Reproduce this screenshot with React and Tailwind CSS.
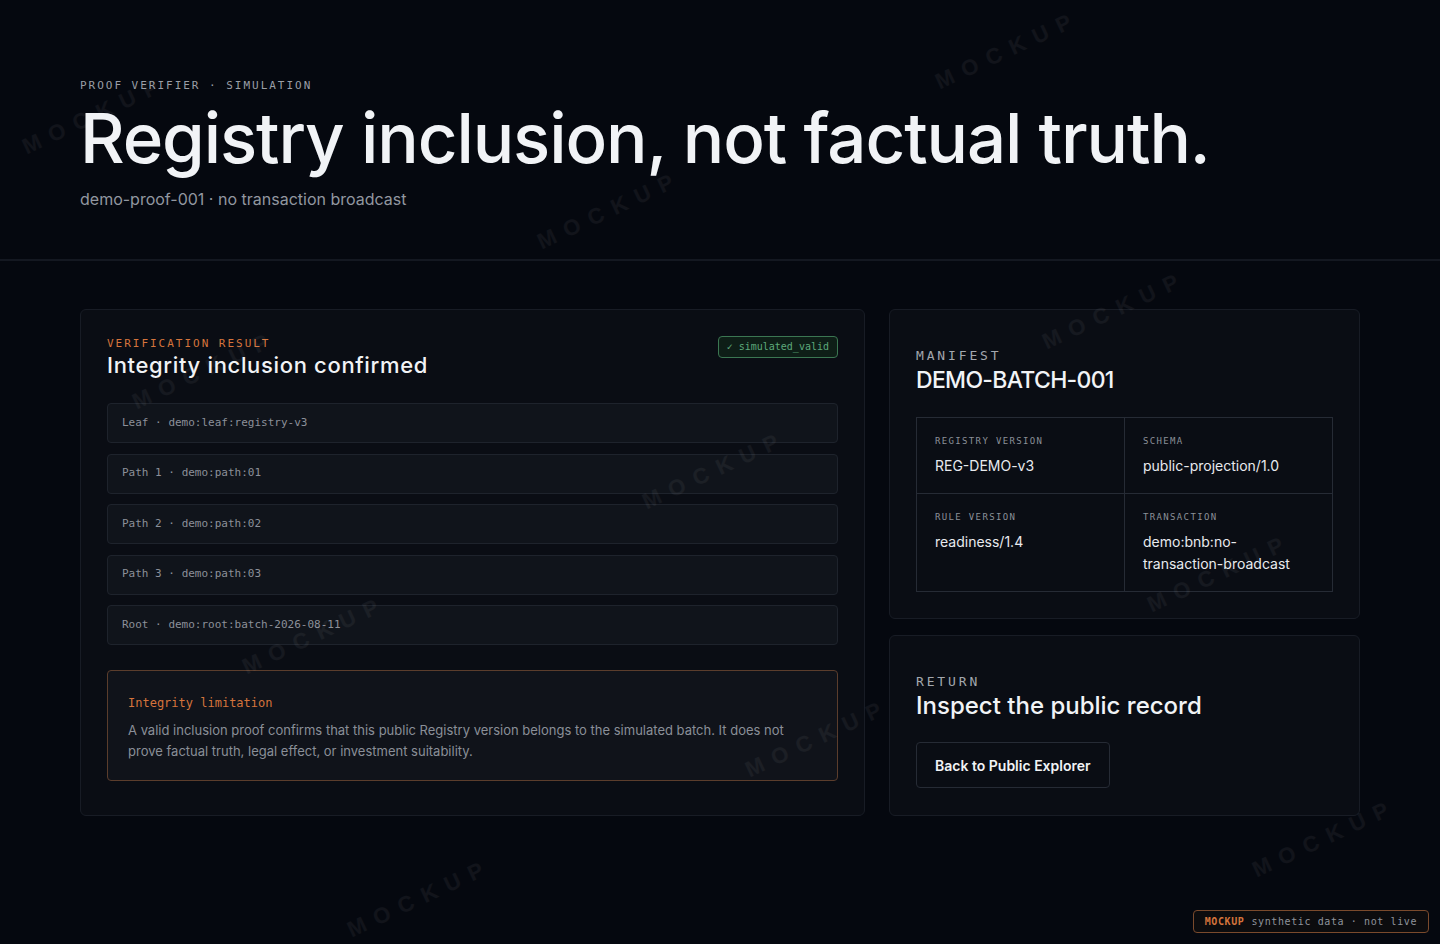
import React from 'react';

const MONO = "[font-family:'DejaVu_Sans_Mono',monospace]";

const proofSteps = [
  { label: 'Leaf', value: 'demo:leaf:registry-v3' },
  { label: 'Path 1', value: 'demo:path:01' },
  { label: 'Path 2', value: 'demo:path:02' },
  { label: 'Path 3', value: 'demo:path:03' },
  { label: 'Root', value: 'demo:root:batch-2026-08-11' },
];

const manifest = [
  { label: 'Registry version', value: 'REG-DEMO-v3' },
  { label: 'Schema', value: 'public-projection/1.0' },
  { label: 'Rule version', value: 'readiness/1.4' },
  { label: 'Transaction', value: 'demo:bnb:no-transaction-broadcast' },
];

// stamped "MOCKUP" marks scattered over the page
const watermarks = [
  'left-[929px] top-[37px]',
  'left-[16px] top-[102px]',
  'left-[531px] top-[197px]',
  'left-[1036px] top-[297px]',
  'left-[126px] top-[357px]',
  'left-[636px] top-[457px]',
  'left-[236px] top-[622px]',
  'left-[739px] top-[725px]',
  'left-[1141px] top-[560px]',
  'left-[1246px] top-[825px]',
  'left-[341px] top-[885px]',
];

const Eyebrow = ({ children, className = '' }) => (
  <div className={`${MONO} text-[11px] leading-4 uppercase tracking-[0.18em] ${className}`}>{children}</div>
);

const Card = ({ children, className = '' }) => (
  <section className={`rounded-md border border-[#181c25] bg-[#0a0d14] ${className}`}>{children}</section>
);

const App = () => {
  return (
    <div className="relative min-h-[944px] overflow-hidden bg-[#05080f] text-[#eef0f3] [font-family:Inter,sans-serif]">
      <header className="border-b-2 border-[#141821] px-20 pt-[78px] pb-[48px]">
        <Eyebrow className="text-[#9a9ea6]">Proof verifier · Simulation</Eyebrow>
        <h1 className="mt-[7px] text-[69px] leading-[75px] font-medium tracking-[-0.016em] text-[#f1f3f6]">
          Registry inclusion, not factual truth.
        </h1>
        <p className="mt-[11px] text-[16px] leading-6 text-[#9297a0]">demo-proof-001 · no transaction broadcast</p>
      </header>

      <main className="grid grid-cols-[5fr_3fr] gap-6 px-20 pt-12 pb-16">
        <Card className="p-[26px]">
          <div className="flex items-start justify-between">
            <div>
              <Eyebrow className="text-[#d5743c]">Verification result</Eyebrow>
              <h2 className="text-[22px] leading-[26px] font-medium tracking-[0.03em] text-[#f1f3f6]">Integrity inclusion confirmed</h2>
            </div>
            <span className={`${MONO} rounded-sm border border-[#3b7652] bg-[#0e1e17] px-[8px] py-[3px] text-[10px] leading-[14px] text-[#5da87a]`}>
              ✓ simulated_valid
            </span>
          </div>

          <div className="mt-[25px] flex flex-col gap-[10.5px]">
            {proofSteps.map((step) => (
              <div
                key={step.label}
                className={`${MONO} flex h-10 items-center rounded-sm border border-[#1e232c] bg-[#10141b] px-[14px] text-[11px] text-[#8c9099]`}
              >
                {step.label} · {step.value}
              </div>
            ))}
          </div>

          <div className="mt-[25px] rounded-sm border border-[#5b3d2c] bg-[#10131a] px-5 pt-[24px] pb-[18px]">
            <div className={`${MONO} text-[12px] leading-4 text-[#d5743c]`}>Integrity limitation</div>
            <p className="mt-[9px] text-[13px] leading-[21px] text-[#8a8f98]">
              A valid inclusion proof confirms that this public Registry version belongs to the simulated batch. It does not
              prove factual truth, legal effect, or investment suitability.
            </p>
          </div>
        </Card>

        <div className="flex flex-col gap-4">
          <Card className="px-[26px] pt-[36px] pb-[26px]">
            <div className={`${MONO} text-[13px] leading-5 uppercase tracking-[0.22em] text-[#a3a7ae]`}>Manifest</div>
            <h2 className="text-[23px] leading-[28px] font-medium tracking-[-0.03em] text-[#f1f3f6]">DEMO-BATCH-001</h2>
            <div className="mt-[23px] grid grid-cols-2 border-t border-l border-[#262b35]">
              {manifest.map((item) => (
                <div key={item.label} className="border-r border-b border-[#262b35] px-[18px] pt-[17px] pb-[16px]">
                  <div className={`${MONO} text-[9px] leading-3 uppercase tracking-[0.15em] text-[#8b9098]`}>{item.label}</div>
                  <div className="mt-[8px] text-[14px] leading-[22px] text-[#e8eaee]">{item.value}</div>
                </div>
              ))}
            </div>
          </Card>

          <Card className="flex-1 px-[26px] pt-[36px] pb-[27px]">
            <div className={`${MONO} text-[13px] leading-5 uppercase tracking-[0.22em] text-[#a3a7ae]`}>Return</div>
            <h2 className="text-[24px] leading-[28px] font-medium text-[#f1f3f6]">Inspect the public record</h2>
            <button className="mt-[22px] h-[46px] rounded-sm border border-[#262b35] bg-[#0a0d14] px-[18px] text-[14px] font-semibold text-[#f1f3f6]">
              Back to Public Explorer
            </button>
          </Card>
        </div>
      </main>

      <div className="pointer-events-none absolute inset-0">
        {watermarks.map((pos) => (
          <span
            key={pos}
            className={`absolute ${pos} w-[158px] -rotate-[25deg] text-center text-[22px] leading-[26px] font-bold tracking-[0.45em] text-white/[0.05] [font-family:'Liberation_Sans',sans-serif]`}
          >
            MOCKUP
          </span>
        ))}
      </div>

      <div className={`${MONO} fixed right-[11px] bottom-[11px] flex items-center gap-[7px] rounded-sm border border-[#7a4a2c] bg-[#0c0c0e] px-[11px] py-[4px] text-[10px] leading-[13px] tracking-[0.06em]`}>
        <span className="font-bold text-[#d5743c]">MOCKUP</span>
        <span className="text-[#8f939b]">synthetic data · not live</span>
      </div>
    </div>
  );
};

export default App;
